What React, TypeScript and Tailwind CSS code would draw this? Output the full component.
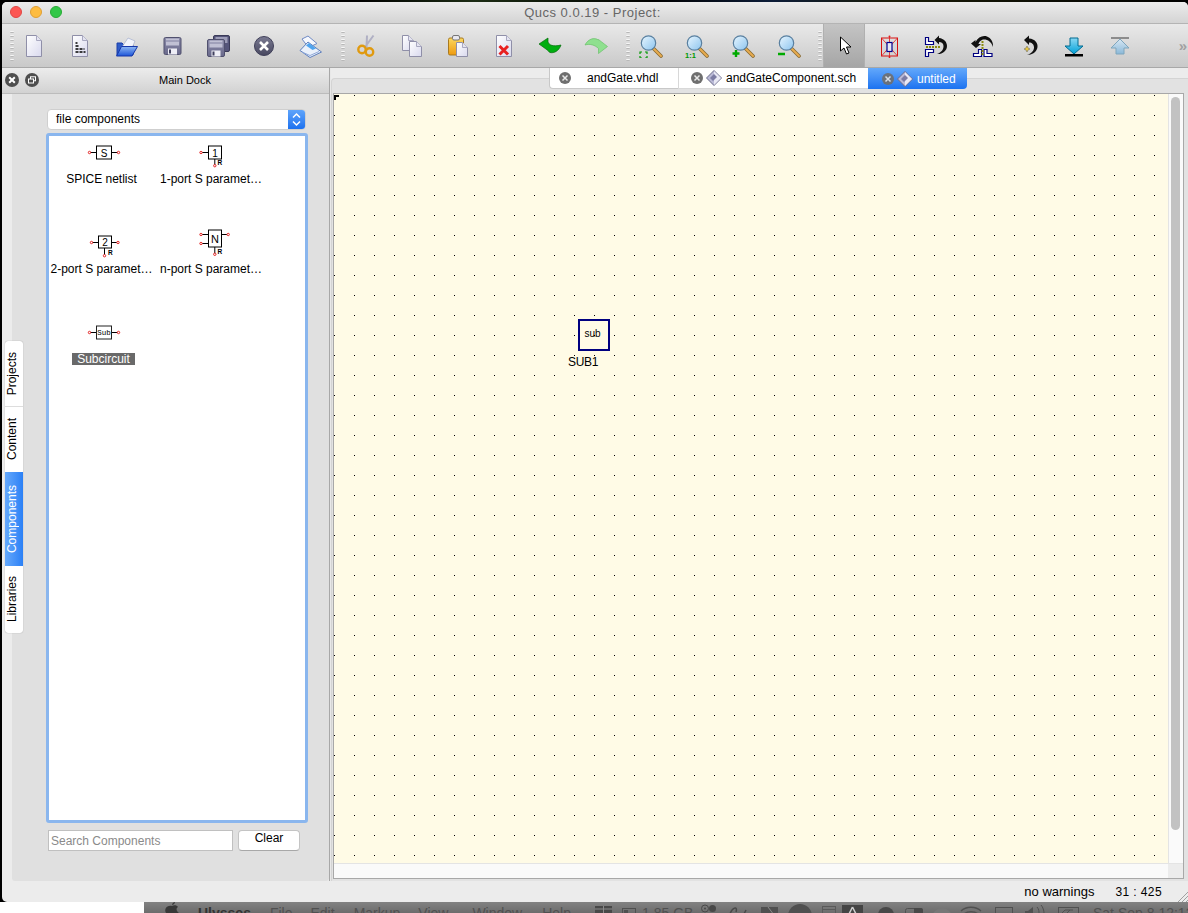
import React from 'react'

const Ico: React.FC<{ children: React.ReactNode }> = ({ children }) => (
  <svg width="24" height="24" viewBox="0 0 24 24" fill="none">
    {children}
  </svg>
)

const Lens: React.FC<{ children?: React.ReactNode }> = ({ children }) => (
  <Ico>
    <path d="M14 14l8 8" stroke="#8a6a30" strokeWidth="3.6" strokeLinecap="round" />
    <path d="M15 15l7 7" stroke="#e8ac50" strokeWidth="2" strokeLinecap="round" />
    <circle cx="9.5" cy="9" r="7.2" fill="url(#lens)" stroke="#5a80a0" strokeWidth="1.2" />
    {children}
  </Ico>
)

const Page: React.FC<{ x?: number; y?: number; w?: number; h?: number }> = ({ x = 4.5, y = 1.5, w = 15, h = 21 }) => (
  <>
    <path d={`M${x} ${y}h${w - 5}l5 5v${h - 5}h-${w}z`} fill="url(#paper)" stroke="#8f8fa8" />
    <path d={`M${x + w - 5} ${y}v5h5`} fill="#e4e4f0" stroke="#a8a8c0" />
  </>
)

const Floppy: React.FC<{ x: number; y: number }> = ({ x, y }) => (
  <>
    <rect x={x} y={y} width="17" height="17" rx="1.5" fill="url(#disk)" stroke="#50506e" />
    <rect x={x + 2} y={y + 1} width="13" height="7" fill="#c0c0d4" />
    <rect x={x + 2} y={y + 3} width="13" height="1" fill="#8080a0" />
    <rect x={x + 4} y={y + 11} width="9" height="6" fill="#eeeef6" />
    <rect x={x + 5} y={y + 12} width="2" height="4" fill="#40405e" />
  </>
)

const Bracket: React.FC<{ d: string }> = ({ d }) => <path d={d} stroke="#000080" strokeWidth="1.2" fill="#fff" />

const toolsA = [
  <Ico key="new"><Page /></Ico>,
  <Ico key="text">
    <Page />
    <path d="M7.5 9h2M7.5 12h4M7.5 15h9M7.5 18h10" stroke="#000" strokeWidth="1.3" strokeDasharray="3 1" />
  </Ico>,
  <Ico key="open">
    <path d="M3 21V9h5l2 2h9v10z" fill="#2f5cc8" stroke="#1a3ea8" />
    <path d="M8 13l6-9 7 3-3 7z" fill="#f2f4fb" stroke="#9aa6c8" strokeWidth=".6" />
    <path d="M2.5 22l5-9.5h16L18 22z" fill="url(#folder)" stroke="#1637a8" />
  </Ico>,
  <Ico key="save"><Floppy x={4} y={3.5} /></Ico>,
  <Ico key="saveall">
    <rect x="7.5" y="1.5" width="16" height="16" rx="1.5" fill="#55557a" stroke="#3a3a58" />
    <rect x="9.5" y="3" width="12" height="6" fill="#9d9db8" />
    <Floppy x={1.5} y={5.5} />
  </Ico>,
  <Ico key="close">
    <circle cx="12" cy="12" r="9.5" fill="url(#knob)" stroke="#40405a" />
    <path d="M8 8l8 8M16 8l-8 8" stroke="#fff" strokeWidth="2.6" />
  </Ico>,
  <Ico key="print">
    <path d="M4 5l6-3 9 7.5-8.500 4z" fill="#f6f8fd" stroke="#6f8ac4" />
    <path d="M2 16.500L10 8l13.500 10L12 23.500z" fill="#eaf1fb" stroke="#5c7ebc" />
    <path d="M8 11.500l3-2.500 7 5.500-3.500 1.500z" fill="#4fa4ee" />
    <path d="M4 18l8 3.500 9-4" stroke="#8fa8d8" strokeWidth="1" />
  </Ico>,
]

const toolsB = [
  <Ico key="cut">
    <path d="M11 13L19.500 1.500M12.500 14L13 1.500" stroke="#b0b0c4" strokeWidth="2" />
    <circle cx="8" cy="15.500" r="3.700" stroke="#e09a10" strokeWidth="2.400" />
    <circle cx="15.500" cy="18" r="3.700" stroke="#e09a10" strokeWidth="2.400" />
  </Ico>,
  <Ico key="copy">
    <Page x={2.5} y={1.5} w={11} h={15} />
    <Page x={9.5} y={7.5} w={12} h={15} />
  </Ico>,
  <Ico key="paste">
    <rect x="2.5" y="4" width="15" height="17" rx="1.5" fill="url(#clip)" stroke="#a87a20" />
    <rect x="6.5" y="1.5" width="7" height="4.5" rx="1.5" fill="#e8e8f0" stroke="#777" />
    <Page x={10.5} y={8.5} w={11} h={14} />
  </Ico>,
  <Ico key="delete">
    <Page />
    <path d="M7.5 12l8.500 8.500M16 12l-8.500 8.500" stroke="#e82020" strokeWidth="3" />
  </Ico>,
  <Ico key="undo">
    <path d="M1 10L10 4V8C11 11 15 13 23 11C21 17 16 19.500 12 18.500C11 18 10.500 17.500 10 16.500z" fill="#00ae10" stroke="#046c0a" strokeWidth=".7" />
  </Ico>,
  <Ico key="redo">
    <path d="M23.500 12.500L14.500 19.500V14.500C11 11 6 9.500 1 11C4 5 10 3 14.500 6V5.500z" fill="#8fe08f" stroke="#6cc06c" strokeWidth=".7" />
  </Ico>,
]

const toolsC = [
  <Lens key="fit">
    <path d="M1 20v-2h2M6 18h2v2M8 22v2H6M3 24H1v-2" stroke="#009900" strokeWidth="1.200" />
  </Lens>,
  <Lens key="one">
    <text x="0" y="23.500" fontSize="7.500" fontWeight="700" fill="#009900" fontFamily="Liberation Sans">1:1</text>
  </Lens>,
  <Lens key="plus">
    <path d="M5 16v7M1.500 19.500h7" stroke="#00aa00" strokeWidth="2.400" />
  </Lens>,
  <Lens key="minus">
    <path d="M1 20h7" stroke="#00aa00" strokeWidth="2.400" />
  </Lens>,
]

const toolsD = [
  <Ico key="rotate">
    <rect x="3.500" y="4" width="16" height="18" stroke="#d81010" strokeWidth="1" />
    <path d="M3.500 4l16 18M19.500 4l-16 18M11.500 2v22" stroke="#e02020" strokeWidth=".8" />
    <rect x="9" y="8.500" width="5" height="9" fill="#e8e8f0" stroke="#000090" strokeWidth="1.200" />
    <circle cx="11.500" cy="2.500" r="1" fill="#e02020" />
    <circle cx="11.500" cy="23" r="1" fill="#e02020" />
  </Ico>,
  <Ico key="mirrorx">
    <Bracket d="M1.500 3.500h3v4h5v3h-8z" />
    <Bracket d="M1.500 15.500h8v3h-5v4h-3z" />
    <path d="M2 13h15" stroke="#8a8a10" strokeWidth="2" strokeDasharray="2 1" />
    <path d="M10.500 6L15 1.500V4C20 4.500 23 8 23 12C23 17 18 20.500 13 20C17 18.500 19.500 16 19.500 12C19.500 9.500 17.500 8 15 8V10.500z" fill="#111" />
  </Ico>,
  <Ico key="mirrory">
    <Bracket d="M3.500 22.500h8v-7h-3v4h-5z" />
    <Bracket d="M22 22.500h-8v-7h3v4h5z" />
    <path d="M12.500 7v14" stroke="#8a8a10" strokeWidth="2" strokeDasharray="2 1" />
    <path d="M1 9.500L5.500 6V8C8 3 13 1 17 2.500C21 4 23.500 8 23 13C21.500 8 18 5.500 14 5.500C11 5.500 9 8 8.500 10H11L6 14z" fill="#111" />
  </Ico>,
  <Ico key="rot">
    <path d="M8 6L13 1.500V4.500C19 5 22 9 21.500 13C21 18 16 21 11 21C15 19.500 18 17 18 13.500C18 10.500 16 8.500 13 8.500V11z" fill="#111" />
    <path d="M11 12l1 2 2 1-2 1-1 2-1-2-2-1 2-1z" fill="#e8c840" stroke="#444" strokeWidth=".4" />
  </Ico>,
  <Ico key="down">
    <path d="M8 4h8v8h5l-9 8-9-8h5z" fill="url(#cyan)" stroke="#006a90" />
    <rect x="3" y="20" width="18" height="2.500" fill="#000" />
  </Ico>,
  <Ico key="up">
    <rect x="3" y="3" width="18" height="2" fill="#8c8c8c" />
    <path d="M12 5l9 9h-5v6H8v-6H3z" fill="url(#pale)" stroke="#7fa6bd" />
  </Ico>,
]

const Tool: React.FC<{ children: React.ReactNode }> = ({ children }) => (
  <div className="w-[34px] mr-[12px] flex justify-center items-center shrink-0">{children}</div>
)

const Handle: React.FC<{ className?: string }> = ({ className }) => (
  <div className={`w-[6px] h-[30px] shrink-0 flex flex-col justify-between items-center ${className ?? ''}`}>
    {Array.from({ length: 8 }).map((_, i) => (
      <span key={i} className="w-[4px] h-[2px] rounded-full bg-[#f6f6f6] border-b border-[#b8b8b8]" />
    ))}
  </div>
)

const Dot: React.FC<{ x: number; y: number }> = ({ x, y }) => (
  <circle cx={x} cy={y} r="1.200" fill="#fff" stroke="#e01010" strokeWidth=".9" />
)

const PartSvg: React.FC<{ children: React.ReactNode }> = ({ children }) => (
  <svg width="44" height="36" viewBox="0 0 44 36" fill="none" className="shrink-0 ml-[2px]">
    {children}
  </svg>
)

const Rbadge: React.FC<{ x: number; y: number }> = ({ x, y }) => (
  <text x={x} y={y} fontSize="6.500" fontWeight="700" fill="#000" fontFamily="Liberation Sans">R</text>
)

const parts = [
  {
    label: 'SPICE netlist',
    icon: (
      <PartSvg>
        <path d="M9 18.500h7M30 18.500h7" stroke="#000" />
        <rect x="15.500" y="12" width="15" height="13" fill="#fff" stroke="#000" />
        <text x="23" y="22.500" textAnchor="middle" fontSize="10" fill="#000" fontFamily="Liberation Sans">S</text>
        <Dot x={8.5} y={18.5} />
        <Dot x={37.5} y={18.5} />
      </PartSvg>
    ),
  },
  {
    label: '1-port S paramet…',
    icon: (
      <PartSvg>
        <path d="M11 18.500h8M24.800 25v6" stroke="#000" />
        <rect x="18.500" y="12" width="13" height="13" fill="#fff" stroke="#000" />
        <text x="25" y="22.500" textAnchor="middle" fontSize="10" fill="#000" fontFamily="Liberation Sans">1</text>
        <Dot x={11} y={18.5} />
        <Dot x={24.8} y={31.7} />
        <Rbadge x={27.5} y={31} />
      </PartSvg>
    ),
  },
  {
    label: '2-port S paramet…',
    icon: (
      <PartSvg>
        <path d="M11 18.500h7M30 18.500h7M23.500 24v7" stroke="#000" />
        <rect x="17.500" y="12" width="13" height="12" fill="#fff" stroke="#000" />
        <text x="24" y="22" textAnchor="middle" fontSize="10" fill="#000" fontFamily="Liberation Sans">2</text>
        <Dot x={10.5} y={18.5} />
        <Dot x={37} y={18.5} />
        <Dot x={23.5} y={31.7} />
        <Rbadge x={27} y={31} />
      </PartSvg>
    ),
  },
  {
    label: 'n-port S paramet…',
    icon: (
      <PartSvg>
        <path d="M11 10.500h8M11 19.500h8M31 10.500h7M24.800 23v7" stroke="#000" />
        <rect x="18.500" y="6" width="13" height="17" fill="#fff" stroke="#000" />
        <text x="25" y="18.500" textAnchor="middle" fontSize="11" fill="#000" fontFamily="Liberation Sans">N</text>
        <Dot x={11} y={10.5} />
        <Dot x={11} y={19.5} />
        <Dot x={38.2} y={10.5} />
        <Dot x={24.8} y={30.3} />
        <Rbadge x={27.5} y={30} />
      </PartSvg>
    ),
  },
  {
    label: 'Subcircuit',
    selected: true,
    icon: (
      <PartSvg>
        <path d="M9 18.500h7M30 18.500h7" stroke="#000" />
        <rect x="15.500" y="12" width="15" height="13" fill="#fff" stroke="#222" />
        <text x="23" y="21" textAnchor="middle" fontSize="7.500" fill="#000" fontFamily="Liberation Mono">Sub</text>
        <Dot x={8.5} y={18.5} />
        <Dot x={37.5} y={18.5} />
      </PartSvg>
    ),
  },
]

const Diamond: React.FC = () => (
  <svg width="16" height="16" viewBox="0 0 16 16" className="shrink-0">
    <path d="M8 .5L15.500 8 8 15.500.5 8z" fill="#b9b9d6" stroke="#6a6a88" />
    <path d="M8 1l7 7-7 7z" fill="#e8e8f4" />
    <path d="M4 8l4-4 3 3-4 4z" fill="#7c7ca4" />
  </svg>
)

const TabClose: React.FC<{ className?: string }> = ({ className }) => (
  <svg width="12" height="12" viewBox="0 0 12 12" className={`shrink-0 ${className ?? ''}`}>
    <circle cx="6" cy="6" r="6" fill="#6f6f6f" />
    <path d="M3.500 3.500l5 5M8.500 3.500l-5 5" stroke="#e8e8e8" strokeWidth="1.500" />
  </svg>
)

const App: React.FC = () => {
  return (
    <div className="w-[1188px] h-[913px] overflow-hidden bg-white flex flex-col font-['Liberation_Sans',sans-serif] text-black">
      <svg className="absolute w-0 h-0">
        <defs>
          <linearGradient id="paper" x1="0" y1="0" x2="1" y2="1">
            <stop offset="0" stopColor="#ffffff" />
            <stop offset="1" stopColor="#d9d9ee" />
          </linearGradient>
          <linearGradient id="lens" x1="0" y1="0" x2="1" y2="1">
            <stop offset="0" stopColor="#e8f6ff" />
            <stop offset="1" stopColor="#8cc4ee" />
          </linearGradient>
          <linearGradient id="disk" x1="0" y1="0" x2="0" y2="1">
            <stop offset="0" stopColor="#8a8aa8" />
            <stop offset="1" stopColor="#6a6a8c" />
          </linearGradient>
          <linearGradient id="folder" x1="0" y1="0" x2="0" y2="1">
            <stop offset="0" stopColor="#8fb8f4" />
            <stop offset="1" stopColor="#1c55d8" />
          </linearGradient>
          <linearGradient id="knob" x1="0" y1="0" x2="0" y2="1">
            <stop offset="0" stopColor="#7a7a92" />
            <stop offset="1" stopColor="#484860" />
          </linearGradient>
          <linearGradient id="clip" x1="0" y1="0" x2="0" y2="1">
            <stop offset="0" stopColor="#fbd860" />
            <stop offset="1" stopColor="#ee9a10" />
          </linearGradient>
          <linearGradient id="cyan" x1="0" y1="0" x2="0" y2="1">
            <stop offset="0" stopColor="#8ad8f4" />
            <stop offset="1" stopColor="#00a0d8" />
          </linearGradient>
          <linearGradient id="pale" x1="0" y1="0" x2="0" y2="1">
            <stop offset="0" stopColor="#d8e8f4" />
            <stop offset="1" stopColor="#8ab8d8" />
          </linearGradient>
        </defs>
      </svg>

      {/* desktop strip above the window */}
      <div className="h-[2px] shrink-0 bg-[linear-gradient(90deg,#000_0%,#000_30%,#1c2c14_40%,#000_55%,#0c1c38_65%,#1a1c08_75%,#000_100%)]" />

      <div className="flex-1 min-h-0 flex bg-black">
        <div className="w-[2px] shrink-0" />
        <div className="flex-1 min-w-0 h-[900px] flex flex-col bg-[#ececec] rounded-t-[5px] rounded-bl-[5px] overflow-hidden">
          {/* title bar */}
          <div className="h-[22px] shrink-0 relative flex items-center justify-center bg-gradient-to-b from-[#ececec] to-[#d4d4d4] border-b border-[#b4b4b4]">
            <div className="absolute left-[8px] top-[4px] flex gap-[8px]">
              <span className="w-[12px] h-[12px] rounded-full bg-[#fc5753] border border-[#df4744]" />
              <span className="w-[12px] h-[12px] rounded-full bg-[#fdbc40] border border-[#de9f34]" />
              <span className="w-[12px] h-[12px] rounded-full bg-[#33c748] border border-[#27aa35]" />
            </div>
            <span className="text-[13px] text-[#666] tracking-[0.5px] mr-[5px]">Qucs 0.0.19 - Project:</span>
          </div>

          {/* toolbar */}
          <div className="h-[44px] shrink-0 flex items-center pl-[7px] bg-gradient-to-b from-[#e9e9e9] to-[#c9c9c9] border-b border-[#a8a8a8]">
            <Handle className="mr-[2px]" />
            {toolsA.map((t, i) => <Tool key={i}>{t}</Tool>)}
            <Handle className="ml-[1px] mr-[3px]" />
            {toolsB.map((t, i) => <Tool key={i}>{t}</Tool>)}
            <Handle className="mr-[3px]" />
            {toolsC.map((t, i) => <Tool key={i}>{t}</Tool>)}
            <Handle className="-ml-[1px]" />
            <div className="w-[42px] h-full flex items-center justify-center bg-gradient-to-b from-[#c4c4c4] to-[#a6a6a6] border-x border-[#b0b0b0]">
              <svg width="24" height="24" viewBox="0 0 24 24">
                <path d="M8.500 3v14l3.500-3 2.500 6 2.500-1-2.500-6h4.500z" fill="#fff" stroke="#000" strokeWidth="1" />
              </svg>
            </div>
            <div className="w-[8px] shrink-0" />
            {toolsD.map((t, i) => <Tool key={i}>{t}</Tool>)}
            <span className="ml-auto mr-[1px] text-[#a0a0a0] text-[15px] font-bold leading-none">»</span>
          </div>

          {/* main */}
          <div className="h-[813px] shrink-0 flex">
            {/* dock */}
            <div className="w-[327px] shrink-0 flex flex-col">
              <div className="h-[26px] shrink-0 relative flex items-center justify-center bg-gradient-to-b from-[#ececec] to-[#d2d2d2] border-b border-[#bcbcbc]">
                <div className="absolute left-[3px] top-[5px] flex gap-[6px]">
                  <svg width="14" height="14" viewBox="0 0 14 14">
                    <circle cx="7" cy="7" r="7" fill="#4e4e4e" />
                    <path d="M4.200 4.200l5.600 5.600M9.800 4.200l-5.600 5.600" stroke="#fff" strokeWidth="2" />
                  </svg>
                  <svg width="14" height="14" viewBox="0 0 14 14">
                    <circle cx="7" cy="7" r="7" fill="#4e4e4e" />
                    <rect x="5.500" y="3.800" width="5" height="4" fill="none" stroke="#fff" />
                    <rect x="3.500" y="6" width="5" height="4" fill="#4e4e4e" stroke="#fff" />
                  </svg>
                </div>
                <span className="text-[11px] ml-[39px] mb-[1px]">Main Dock</span>
              </div>
              <div className="flex-1 min-h-0 flex pl-[3px]">
                {/* side tabs */}
                <div className="w-[18px] shrink-0 self-center relative z-10 flex flex-col text-[12px] rounded-[3px] overflow-hidden bg-white shadow-[0_0_1px_#888] mt-[-1px]">
                  <div className="h-[66px] flex items-center justify-center pr-[4px] border-b border-[#ddd]">
                    <span className="[writing-mode:vertical-rl] rotate-180">Projects</span>
                  </div>
                  <div className="h-[65px] flex items-center justify-center pr-[4px]">
                    <span className="[writing-mode:vertical-rl] rotate-180">Content</span>
                  </div>
                  <div className="h-[94px] flex items-center justify-center pr-[4px] text-white bg-gradient-to-r from-[#64a8fb] to-[#2a80f6]">
                    <span className="[writing-mode:vertical-rl] rotate-180">Components</span>
                  </div>
                  <div className="h-[67px] flex items-center justify-center pr-[4px]">
                    <span className="[writing-mode:vertical-rl] rotate-180">Libraries</span>
                  </div>
                </div>
                <div className="flex-1 min-w-0 -ml-[11px] bg-[#e0e0e0] rounded-b-[3px] pt-[15px] pl-[34px]">
                  <div className="ml-[1px] w-[259px] h-[21px] flex items-center bg-white rounded-[4px] border border-[#cfcfcf] overflow-hidden">
                    <span className="flex-1 pl-[8px] pb-[1px] text-[12px]">file components</span>
                    <div className="w-[17px] h-full flex flex-col items-center justify-center bg-gradient-to-b from-[#5ea4fb] to-[#1b71ef]">
                      <svg width="9" height="15" viewBox="0 0 9 15" fill="none" stroke="#fff" strokeWidth="1.500">
                        <path d="M1 5.500L4.500 2 8 5.500M1 9.500L4.500 13 8 9.500" />
                      </svg>
                    </div>
                  </div>
                  <div className="mt-[3px] w-[262px] h-[690px] bg-white border-[3px] border-[#8ab6ee] rounded-[3px]">
                    <div className="-ml-[2px] grid grid-cols-[109px_110px] auto-rows-[90px] content-start">
                      {parts.map((p) => (
                        <div key={p.label} className="flex flex-col items-center -mt-[2px] h-[90px]">
                          {p.icon}
                          <span className={`text-[12px] leading-[12px] mt-[3px] whitespace-nowrap px-[5px] ${p.selected ? 'ml-[4px] bg-[#696969] text-white' : ''}`}>
                            {p.label}
                          </span>
                        </div>
                      ))}
                    </div>
                  </div>
                  <div className="mt-[7px] ml-[2px] flex gap-[5px]">
                    <div className="w-[185px] h-[21px] bg-white border border-[#c0c0c0] flex items-center pl-[2px] text-[12px] text-[#8a8a8a]">
                      Search Components
                    </div>
                    <button className="w-[62px] h-[21px] bg-white rounded-[4px] border border-[#c4c4c4] border-b-[#a8a8a8] text-[12px] pb-[6px] leading-[14px]">
                      Clear
                    </button>
                  </div>
                </div>
              </div>
            </div>

            {/* splitter */}
            <div className="w-[2px] shrink-0 bg-[#a8a8a8] border-r border-[#e8e8e8]" />

            {/* work area */}
            <div className="flex-1 min-w-0 flex flex-col">
              <div className="h-[21px] shrink-0 relative z-10 pl-[218px] flex text-[12px]">
                <div className="w-[129px] h-full bg-white rounded-bl-[4px] border-l border-b border-[#c8c8c8] flex items-center pl-[9px]">
                  <TabClose />
                  <span className="ml-[16px]">andGate.vhdl</span>
                </div>
                <div className="w-[190px] h-full bg-white border-l border-b border-[#d8d8d8] flex items-center pl-[12px]">
                  <TabClose />
                  <span className="ml-[3px]"><Diamond /></span>
                  <span className="ml-[4px]">andGateComponent.sch</span>
                </div>
                <div className="w-[99px] h-full rounded-br-[4px] text-white bg-gradient-to-b from-[#62a8fb] to-[#1a72f0] flex items-center pl-[14px]">
                  <TabClose className="opacity-90" />
                  <span className="ml-[3px]"><Diamond /></span>
                  <span className="ml-[4px]">untitled</span>
                </div>
              </div>
              <div className="flex-1 min-h-0 -mt-[11px] bg-[#e2e2e2] border-t border-l border-[#d4d4d4] rounded-tl-[4px] pt-[14px] pl-[1px] pr-[4px]">
                <div className="h-[786px] border border-[#a8a8a8] flex flex-col bg-[#fafafa]">
                  <div className="h-[769px] shrink-0 flex">
                    <div className="flex-1 relative bg-[#fffbe6] overflow-hidden">
                      <svg className="absolute inset-0 w-full h-full">
                        <defs>
                          <pattern id="grid" width="20" height="20" patternUnits="userSpaceOnUse" y="1">
                            <rect width="1" height="1" fill="#000" />
                          </pattern>
                        </defs>
                        <rect width="100%" height="100%" fill="url(#grid)" />
                        <path d="M1 6V2h4" stroke="#000" strokeWidth="2" fill="none" />
                      </svg>
                      <div className="absolute left-[244px] top-[225px] w-[32px] h-[32px] border-2 border-[#000080] flex items-center justify-center text-[10px] pb-[3px] pr-[3px]">
                        sub
                      </div>
                      <span className="absolute left-[234px] top-[261px] text-[12px] leading-[14px] tracking-[-0.3px]">SUB1</span>
                    </div>
                    <div className="w-[15px] shrink-0 bg-[#fafafa] border-l border-[#e4e4e4] pl-[2px] pt-[3px]">
                      <div className="w-[9px] h-[733px] rounded-full bg-[#c2c2c2]" />
                    </div>
                  </div>
                  <div className="flex-1 flex border-t border-[#e4e4e4]">
                    <div className="flex-1" />
                    <div className="w-[15px] bg-[#ececec]" />
                  </div>
                </div>
              </div>
            </div>
          </div>

          {/* status bar */}
          <div className="flex-1 min-h-0 relative flex items-center justify-end text-[13px] pr-[26px] pt-[1px]">
            <span className="mr-[21px]">no warnings</span>
            <span className="text-[12px] tracking-[0.4px]">31 : 425</span>
            <svg width="11" height="11" viewBox="0 0 11 11" className="absolute right-0 bottom-0" stroke="#a0a0a0" fill="none">
              <path d="M1 11L11 1M5 11l6-6M9 11l2-2" />
            </svg>
          </div>
        </div>
      </div>

      {/* desktop and menu bar below the window */}
      <div className="h-[11px] shrink-0 flex bg-white overflow-hidden">
        <div className="w-[144px] shrink-0" />
        <div className="flex-1 min-w-0 bg-gradient-to-b from-[#828282] to-[#6c6c6c] flex text-[14px] leading-[14px] text-[#505050] pt-[4px] whitespace-nowrap">
          <svg width="16" height="11" viewBox="0 0 16 11" className="ml-[20px] mr-[18px] -mt-[4px] shrink-0" fill="#383838">
            <path d="M8 4c1.500-1 5-1 6 1-2 1-2 4 1 6H2C0 8 2 3 8 4zM8 3c0-2 2-3 3-3 0 2-2 3-3 3z" />
          </svg>
          <span className="font-bold text-[#333] mr-[19px]">Ulysses</span>
          <span className="mr-[18px]">File</span>
          <span className="mr-[19px]">Edit</span>
          <span className="mr-[18px]">Markup</span>
          <span className="mr-[24px]">View</span>
          <span className="mr-[20px]">Window</span>
          <span>Help</span>
          <svg width="500" height="11" viewBox="0 0 500 11" className="ml-auto -mt-[4px] shrink-0" fill="none">
            <path d="M5 4h17v7H5z" fill="#484848" />
            <path d="M13.500 4v7M5 7h17" stroke="#8a8a8a" />
            <rect x="32.500" y="6.500" width="13" height="8" stroke="#505050" />
            <rect x="34" y="8" width="4" height="6" fill="#505050" />
            <text x="52" y="16" fontSize="14" fill="#505050" fontFamily="Liberation Sans">1.85 GB</text>
            <circle cx="115" cy="6.500" r="3.500" stroke="#484848" />
            <circle cx="115" cy="6.500" r="1" fill="#484848" />
            <circle cx="122.500" cy="6.500" r="3.500" fill="#484848" />
            <path d="M140 12c2-6 8-9 6-2M156 8l-2 4" stroke="#484848" strokeWidth="1.500" />
            <path d="M171 5h17v8h-17z" fill="#505050" />
            <path d="M178 5l6 8" stroke="#8a8a8a" />
            <circle cx="210" cy="14" r="12" fill="#505050" />
            <rect x="232.500" y="4.500" width="13" height="10" stroke="#5a5a5a" />
            <path d="M232 7.500h14" stroke="#5a5a5a" />
            <rect x="252" y="3" width="21" height="12" fill="#444" />
            <path d="M262.500 5l-4 8M262.500 5l4 8" stroke="#d0d0d0" strokeWidth="1.500" />
            <circle cx="296" cy="13" r="8" fill="#484848" />
            <rect x="315.500" y="6.500" width="17" height="8" rx="2" stroke="#505050" />
            <path d="M324 6h7a2 2 0 012 2v3h-9z" fill="#484848" />
            <circle cx="352" cy="16" r="10" fill="#777" />
            <path d="M371 9c5-5 15-5 20 0M374 12c3-3 11-3 14 0" stroke="#505050" strokeWidth="1.300" />
            <rect x="405.500" y="5.500" width="17" height="10" stroke="#505050" />
            <path d="M435 9h3l5-4v8h-8z" fill="#505050" />
            <path d="M447 5c2 2 2 5 2 6M451 3c2 2 3 6 3 8" stroke="#505050" />
            <rect x="468.500" y="5.500" width="20" height="10" stroke="#505050" />
            <path d="M472 11l3-3h8M477 11l3-3" stroke="#505050" />
          </svg>
          <span className="ml-[3px] w-[95px] shrink-0 overflow-hidden">Sat Sep 8  12:12</span>
        </div>
      </div>
    </div>
  )
}

export default App
